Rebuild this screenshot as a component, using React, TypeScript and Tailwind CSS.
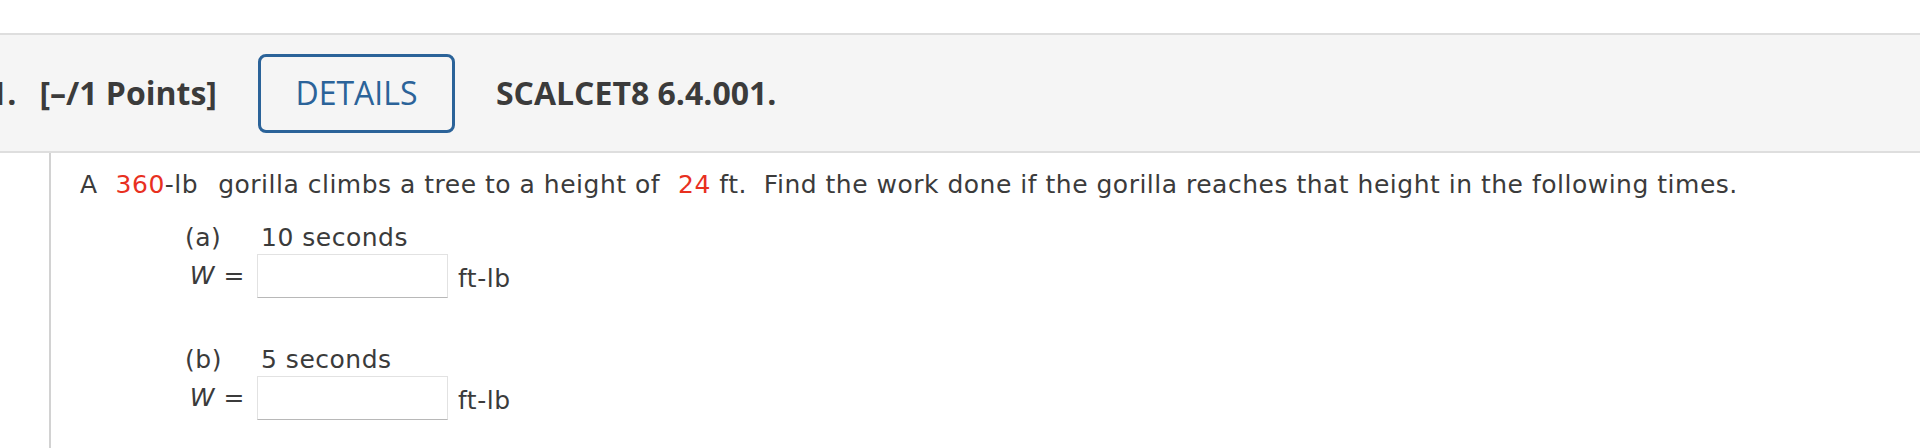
const body = "font-['DejaVu_Sans',Verdana,sans-serif] tracking-[0.5px]"

function AnswerRow({ label, time }: { label: string; time: string }) {
	return (
		<div>
			<div className="flex text-[25px] leading-[30px]">
				<span className="w-[76px]">({label})</span>
				<span>{time}</span>
			</div>
			<div className="mt-[1px] flex items-center text-[25px] leading-[30px]">
				<span className="w-[72px] pr-[12px] text-right">
					<i>W</i> =
				</span>
				<input
					type="text"
					className="h-[44px] w-[191px] border border-[#e2e2e2] border-b-[#b8b8b8] bg-white outline-none"
				/>
				<span className="ml-[10px] pt-[6px]">ft-lb</span>
			</div>
		</div>
	)
}

export default function App() {
	return (
		<div className="min-h-[448px] bg-white pt-[33px] text-[#3b3b3b]">
			<div className="flex h-[120px] items-center border-y-2 border-[#dedede] bg-[#f5f5f5] font-['Open_Sans',sans-serif] text-[32px] font-bold leading-none text-[#3b3b3b]">
				<span className="ml-[-11px] mr-[23px]">1.</span>
				<span>[–/1 Points]</span>
				<button className="ml-[41px] flex h-[79px] w-[197px] items-center justify-center rounded-[8px] border-[3px] border-[#2b6399] bg-transparent font-normal text-[#2b6399]">
					DETAILS
				</button>
				<span className="ml-[41px]">SCALCET8 6.4.001.</span>
			</div>

			<div className={`ml-[49px] min-h-[295px] border-l-2 border-[#d2d2d2] pl-[29px] pt-[17px] ${body}`}>
				<p className="text-[25px] leading-[30px]">
					A<span className="ml-[18px] text-[#e8301f]">360</span>-lb
					<span className="ml-[20px]">gorilla climbs a tree to a height of</span>
					<span className="ml-[18px] text-[#e8301f]">24</span> ft.&nbsp; Find the work done if the gorilla
					reaches that height in the following times.
				</p>

				<div className="ml-[105px] mt-[23px]">
					<AnswerRow label="a" time="10 seconds" />
					<div className="mt-[47px]">
						<AnswerRow label="b" time="5 seconds" />
					</div>
				</div>
			</div>
		</div>
	)
}
